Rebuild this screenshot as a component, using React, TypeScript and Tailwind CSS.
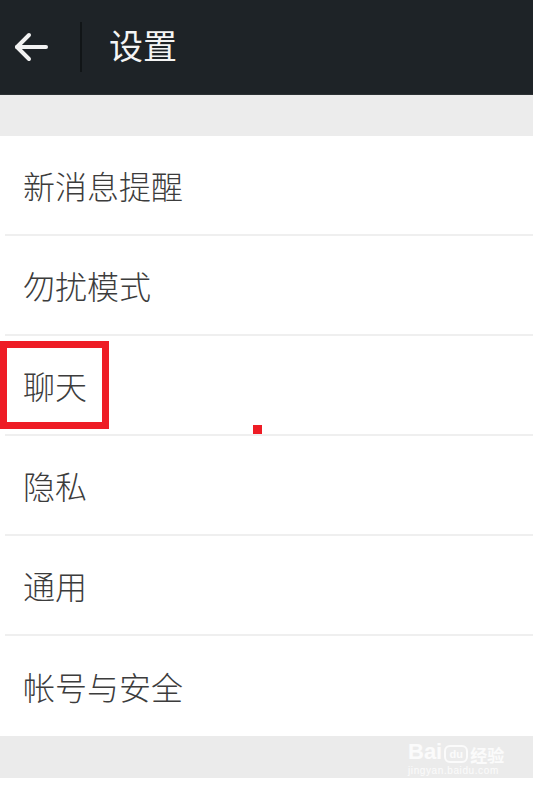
import React from "react";

const items = ["新消息提醒", "勿扰模式", "聊天", "隐私", "通用", "帐号与安全"];

export default function App() {
  const font = { fontFamily: '"Noto Sans CJK SC", "Noto Sans", sans-serif' };
  return (
    <div className="w-[533px] h-[792px] bg-white relative overflow-hidden" style={font}>
      <div className="h-[95px] bg-[#1e2327] flex items-center border-b border-[#2c3134]">
        <div className="w-[80px] flex items-center pl-[13px]">
          <svg width="36" height="32" viewBox="0 0 36 32" fill="none" stroke="#f2f2f2" strokeWidth="4" strokeLinecap="round" strokeLinejoin="round">
            <path d="M33 16H4" />
            <path d="M16 4L4 16l12 12" />
          </svg>
        </div>
        <div className="w-[2px] h-[50px] bg-[#111517]" />
        <div className="pl-[27px] text-[34px] leading-none text-[#f4f4f4] -mt-[4px]">设置</div>
      </div>
      <div className="h-[41px] bg-[#ececec]" />
      {items.map((t, i) => (
        <div key={t}>
          <div
            className={`${i < items.length - 1 ? "h-[98px]" : "h-[100px]"} flex items-center pl-[23px] text-[32px] text-[#3c3c3c] leading-none font-light`}
          >
            {t}
          </div>
          {i < items.length - 1 && <div className="h-[2px] ml-[5px] bg-[#efefef]" />}
        </div>
      ))}
      <div className="h-[42px] bg-[#ebebeb] relative">
        <div className="absolute left-[408px] top-[5px] flex flex-col items-start text-white/80">
          <div className="flex items-end leading-none">
            <span className="text-[22px] font-bold" style={{ fontFamily: '"Liberation Sans", sans-serif' }}>Bai</span>
            <span className="ml-[2px] w-[24px] h-[18px] rounded-[6px] border-2 border-white/80 text-[11px] font-bold flex items-center justify-center" style={{ fontFamily: '"Liberation Sans", sans-serif' }}>du</span>
            <span className="ml-[2px] text-[17px] font-bold">经验</span>
          </div>
          <div className="text-[10px] leading-none mt-[3px] tracking-[0.6px]" style={{ fontFamily: '"Liberation Sans", sans-serif' }}>jingyan.baidu.com</div>
        </div>
      </div>
      <div className="absolute left-0 top-[341px] w-[109px] h-[88px] border-[7px] border-[#ee1c25]" />
      <div className="absolute left-[253px] top-[425px] w-[9px] h-[9px] bg-[#ee1c25]" />
    </div>
  );
}
